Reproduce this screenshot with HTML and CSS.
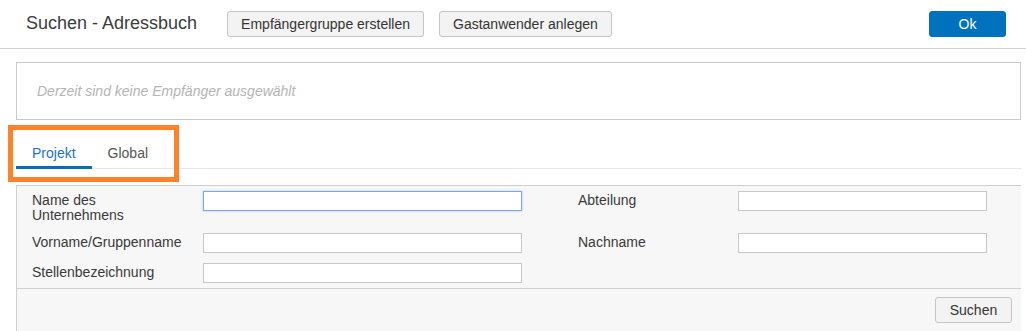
FILE: index.html
```html
<!DOCTYPE html>
<html lang="de">
  <head>
    <meta charset="UTF-8" />
    <meta name="viewport" content="width=device-width, initial-scale=1.0" />
    <title>Suchen - Adressbuch</title>
    <link rel="stylesheet" href="styles.css">
  </head>
  <body>
    <header class="dialog-header">
      <h1 class="dialog-title">Suchen - Adressbuch</h1>
      <button class="btn">Empfängergruppe erstellen</button>
      <button class="btn">Gastanwender anlegen</button>
      <button class="btn btn-primary">Ok</button>
    </header>

    <main class="dialog-body">
      <div class="recipients">
        <p class="recipients-empty">Derzeit sind keine Empfänger ausgewählt</p>
      </div>

      <nav class="tabs">
        <a class="tab active">Projekt</a>
        <a class="tab">Global</a>
      </nav>

      <section class="search-panel">
        <div class="search-fields">
          <label class="field-label">Name des Unternehmens</label>
          <input class="field-input focused" type="text" />
          <span></span>
          <label class="field-label">Abteilung</label>
          <input class="field-input" type="text" />

          <label class="field-label">Vorname/Gruppenname</label>
          <input class="field-input" type="text" />
          <span></span>
          <label class="field-label">Nachname</label>
          <input class="field-input" type="text" />

          <label class="field-label">Stellenbezeichnung</label>
          <input class="field-input" type="text" />
        </div>
        <div class="search-footer">
          <button class="btn">Suchen</button>
        </div>
      </section>
    </main>

    <!-- highlight marker around the tabs -->
    <div class="highlight"></div>
  </body>
</html>
```

FILE: styles.css
```css
* {
  margin: 0;
  padding: 0;
  box-sizing: border-box;
  font-family: "Liberation Sans", Arial, sans-serif;
}

body {
  background-color: white;
  color: #333;
  position: relative;
  overflow: hidden;
}

.dialog-header {
  height: 49px;
  display: flex;
  align-items: center;
  padding: 0 20px 1px 26px;
  border-bottom: 1px solid #d2d2d2;
}

.dialog-title {
  font-size: 18px;
  font-weight: normal;
  color: #3c3c3c;
  margin-right: 30px;
}

.btn {
  height: 26px;
  padding: 0 13px;
  font-size: 14px;
  color: #333;
  background-color: #f3f3f3;
  border: 1px solid #c6c6c6;
  border-radius: 3px;
  margin-right: 15px;
  cursor: pointer;
}

.btn-primary {
  margin-left: auto;
  margin-right: 0;
  width: 77px;
  background-color: #0071bc;
  border-color: #0071bc;
  color: white;
}

.dialog-body {
  padding: 13px 5px 0 16px;
}

.recipients {
  height: 58px;
  border: 1px solid #cacaca;
  display: flex;
  align-items: center;
  padding-left: 20px;
}

.recipients-empty {
  font-size: 14px;
  font-style: italic;
  color: #b4b4b4;
}

.tabs {
  display: flex;
  margin-top: 17px;
  border-bottom: 1px solid #e8e8e8;
}

.tab {
  padding: 8px 16px 5px;
  line-height: 16px;
  font-size: 14px;
  color: #555;
  border-bottom: 3px solid transparent;
  margin-bottom: -1px;
  cursor: pointer;
}

.tab.active {
  color: #1a74bd;
  border-bottom-color: #0070ba;
}

.search-panel {
  margin-top: 16px;
  background-color: #f7f7f7;
  border-top: 1px solid #cfcfcf;
  border-left: 1px solid #cfcfcf;
}

.search-fields {
  display: grid;
  grid-template-columns: 171px 319px 56px 160px 249px;
  row-gap: 10px;
  padding: 5px 0 5px 15px;
  border-bottom: 1px solid #d0d0d0;
}

.field-label {
  font-size: 14px;
  line-height: 15px;
  color: #3a3a3a;
  padding-top: 2px;
}

.field-label:first-child {
  width: 100px;
}

.field-input {
  height: 20px;
  border: 1px solid #c8c8c8;
  background-color: white;
  font-size: 13px;
  padding: 0 4px;
  outline: none;
}

.field-input.focused {
  border-color: #7fa7e0;
  box-shadow: 0 0 2px rgba(80, 130, 220, 0.5);
}

.search-footer {
  display: flex;
  justify-content: flex-end;
  padding: 8px 9px 8px 0;
}

.search-footer .btn {
  margin-right: 0;
  width: 77px;
  padding: 0;
}

.highlight {
  position: absolute;
  left: 8px;
  top: 125px;
  width: 171px;
  height: 57px;
  border: 5px solid #fe8229;
}
```
